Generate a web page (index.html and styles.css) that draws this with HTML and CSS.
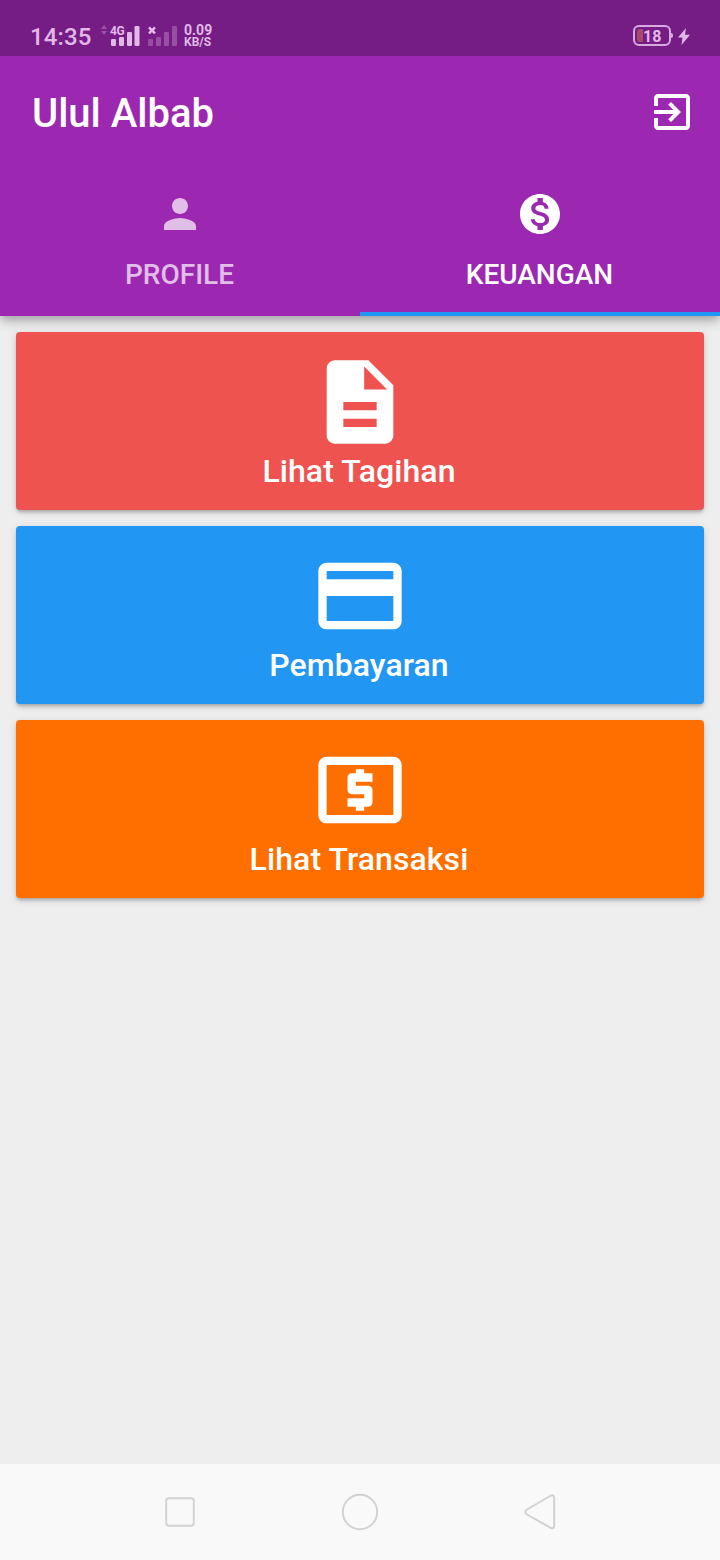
FILE: index.html
```html
<!DOCTYPE html>
<html lang="id">
<head>
<meta charset="utf-8">
<title>Ulul Albab</title>
<link rel="stylesheet" href="styles.css">
</head>
<body>
<div class="screen">
  <header class="header">
    <div class="status">
      <span class="clock">14:35</span>
      <div class="mobile">
        <svg class="data" width="6" height="10" viewBox="0 0 6 10"><path d="M0 4l3-4 3 4zM0 6h6l-3 4z"/></svg>
        <div class="sim">
          <span class="network">4G</span>
          <svg class="signal" width="30" height="22" viewBox="0 0 30 22"><rect x="1" y="14" width="5" height="7" rx="1.300"/><rect x="9" y="12" width="5" height="9" rx="1.300"/><rect x="17" y="7" width="5" height="14" rx="1.300"/><rect x="24.500" y="1" width="5" height="20" rx="1.300"/></svg>
        </div>
        <svg class="sim-off" width="30" height="22" viewBox="0 0 30 22"><g opacity=".32"><rect x="0" y="14" width="5" height="7" rx="1.300"/><rect x="8" y="12" width="5" height="9" rx="1.300"/><rect x="16" y="7" width="5" height="14" rx="1.300"/><rect x="24" y="1" width="5" height="20" rx="1.300"/></g><path class="cross" d="M1 2.300l6 6M7 2.300l-6 6"/></svg>
      </div>
      <div class="speed"><span class="rate">0.09</span><span class="unit">KB/S</span></div>
      <div class="battery">
        <div class="cell"><span class="charge"></span><span class="level">18</span></div>
        <span class="tip"></span>
        <svg class="bolt" width="12" height="17" viewBox="0 0 12 17"><path d="M8 0L0 9.500h4.500L3.500 17 12 6.800H7z"/></svg>
      </div>
    </div>
    <div class="toolbar">
      <h1 class="title">Ulul Albab</h1>
      <svg class="icon" viewBox="0 0 24 24"><path d="M10.090 15.590L11.500 17l5-5-5-5-1.410 1.410L12.670 11H3v2h9.670l-2.580 2.590zM19 3H5c-1.110 0-2 .9-2 2v4h2V5h14v14H5v-4H3v4c0 1.100.89 2 2 2h14c1.100 0 2-.9 2-2V5c0-1.100-.9-2-2-2z"/></svg>
    </div>
    <nav class="tabs">
      <div class="tab muted">
        <svg class="icon" viewBox="0 0 24 24"><path d="M12 12c2.210 0 4-1.790 4-4s-1.790-4-4-4-4 1.790-4 4 1.790 4 4 4zm0 2c-2.670 0-8 1.340-8 4v2h16v-2c0-2.660-5.330-4-8-4z"/></svg>
        <span class="tab-label">PROFILE</span>
      </div>
      <div class="tab active">
        <svg class="icon" viewBox="0 0 24 24"><path d="M12 2C6.480 2 2 6.480 2 12s4.480 10 10 10 10-4.480 10-10S17.520 2 12 2zm1.410 16.090V20h-2.670v-1.930c-1.710-.36-3.160-1.460-3.270-3.400h1.960c.1 1.050.82 1.870 2.650 1.870 1.960 0 2.400-.98 2.400-1.590 0-.83-.44-1.610-2.670-2.140-2.480-.6-4.180-1.620-4.180-3.670 0-1.720 1.390-2.840 3.110-3.210V4h2.670v1.950c1.860.45 2.790 1.860 2.850 3.390H14.300c-.05-1.110-.64-1.870-2.220-1.870-1.500 0-2.400.68-2.400 1.640 0 .84.65 1.390 2.670 1.910s4.180 1.390 4.180 3.910c-.01 1.830-1.380 2.830-3.120 3.160z"/></svg>
        <span class="tab-label">KEUANGAN</span>
      </div>
    </nav>
  </header>
  <main class="cards">
    <section class="card bills">
      <svg class="card-icon" viewBox="0 0 24 24"><path d="M14 2H6c-1.100 0-1.990.9-1.990 2L4 20c0 1.100.89 2 1.990 2H18c1.100 0 2-.9 2-2V8l-6-6zm2 16H8v-2h8v2zm0-4H8v-2h8v2zm-3-5V3.500L18.500 9H13z"/></svg>
      <span class="card-label">Lihat Tagihan</span>
    </section>
    <section class="card payment">
      <svg class="card-icon" viewBox="0 0 24 24"><path d="M20 4H4c-1.110 0-1.990.89-1.990 2L2 18c0 1.110.89 2 2 2h16c1.110 0 2-.89 2-2V6c0-1.110-.89-2-2-2zm0 14H4v-6h16v6zm0-10H4V6h16v2z"/></svg>
      <span class="card-label">Pembayaran</span>
    </section>
    <section class="card transactions">
      <svg class="card-icon" viewBox="0 0 24 24"><path d="M11 17h2v-1h1c.55 0 1-.45 1-1v-3c0-.55-.45-1-1-1h-3v-1h4V8h-2V7h-2v1h-1c-.55 0-1 .45-1 1v3c0 .55.45 1 1 1h3v1H9v2h2v1zm9-13H4c-1.110 0-1.990.89-1.990 2L2 18c0 1.110.89 2 2 2h16c1.110 0 2-.89 2-2V6c0-1.110-.89-2-2-2zm0 14H4V6h16v12z"/></svg>
      <span class="card-label">Lihat Transaksi</span>
    </section>
  </main>
  <footer class="navbar">
    <svg class="nav-icon" viewBox="0 0 40 40"><rect x="6.200" y="6.200" width="27.600" height="27.600" rx="2.500"/></svg>
    <svg class="nav-icon" viewBox="0 0 40 40"><circle cx="20" cy="20" r="17.200"/></svg>
    <svg class="nav-icon" viewBox="0 0 40 40"><path d="M31 3.500L7 17.500Q3.500 20 7 22.500L31 36Q34.200 37 34.200 33.500V6Q34.200 2.500 31 3.500z"/></svg>
  </footer>
</div>
</body>
</html>
```
FILE: styles.css
```css
* { box-sizing: border-box; }

body {
  margin: 0;
  font-family: Roboto, "Liberation Sans", sans-serif;
  font-weight: 500;
}

svg { display: block; flex: none; }

.screen {
  display: flex;
  flex-direction: column;
  width: 720px;
  height: 1560px;
  background: #eee;
  overflow: hidden;
}

.header {
  color: #fff;
  background: #9c27b0;
  box-shadow: 0 4px 8px -2px rgba(0, 0, 0, .2), 0 8px 10px rgba(0, 0, 0, .1), 0 2px 12px rgba(0, 0, 0, .1);
}

/* Status bar */
.status {
  display: flex;
  align-items: flex-start;
  height: 56px;
  padding: 0 30px;
  color: #e1b9e6;
  fill: #e1b9e6;
  background: #751d84;
}

.clock {
  width: 71px;
  padding-top: 22px;
  font-size: 24px;
  line-height: 30px;
  letter-spacing: .1px;
}

.mobile { display: flex; width: 83px; padding-top: 25px; }
.data { opacity: .35; }
.sim { position: relative; margin-left: 3px; width: 30px; }
.network {
  position: absolute;
  top: 0;
  left: 0;
  font-size: 12px;
  font-weight: 700;
  line-height: 12px;
  letter-spacing: -.5px;
}
.sim-off { margin-left: 8px; }
.cross { stroke: #e1b9e6; stroke-width: 2.6; }

.speed {
  display: flex;
  flex-direction: column;
  padding-top: 24px;
  font-weight: 700;
}
.rate { font-size: 14px; line-height: 13px; }
.unit { font-size: 12px; line-height: 11px; }

.battery {
  display: flex;
  align-items: center;
  margin-left: auto;
  padding-top: 25px;
}
.cell {
  display: flex;
  align-items: center;
  width: 38px;
  height: 21px;
  padding-left: 2px;
  border: 2px solid #d8abe0;
  border-radius: 6px;
}
.charge { width: 6px; height: 13px; border-radius: 3px 1px 1px 3px; background: #a74a67; }
.level { padding-top: 2px; font-size: 16px; font-weight: 700; line-height: 18px; }
.tip { width: 2px; height: 5px; border-radius: 0 2px 2px 0; background: #d8abe0; }
.bolt { margin: 2px 0 0 5px; }

/* App bar */
.toolbar {
  display: flex;
  align-items: center;
  justify-content: space-between;
  height: 112px;
  padding: 0 24px 0 32px;
}
.title { margin: 0; padding-top: 3px; font-size: 40px; font-weight: 500; line-height: 48px; }
.icon { width: 48px; height: 48px; fill: currentColor; }

.tabs { display: flex; height: 148px; }
.tab {
  display: flex;
  flex: 1;
  flex-direction: column;
  align-items: center;
  gap: 21px;
  padding-top: 22px;
  border-bottom: 4px solid transparent;
}
.muted { color: #e1bee7; }
.active { border-bottom-color: #2196f3; }
.tab-label { padding-right: 1px; font-size: 28px; line-height: 32px; }

/* Menu cards */
.cards {
  display: flex;
  flex: 1;
  flex-direction: column;
  gap: 16px;
  padding: 16px;
}
.card {
  display: flex;
  flex-direction: column;
  align-items: center;
  height: 178px;
  padding-top: 20px;
  color: #fff;
  border-radius: 4px;
  box-shadow: 0 4px 4px -2px rgba(0, 0, 0, .16), 0 2px 3px rgba(0, 0, 0, .1), 0 2px 8px rgba(0, 0, 0, .12);
}
.bills { background: #ef5350; }
.payment { background: #2196f3; }
.transactions { background: #ff6f00; }
.card-icon { width: 100px; height: 100px; fill: currentColor; }
.card-label { padding-right: 2px; font-size: 32px; line-height: 38px; letter-spacing: .08px; }

/* System navigation */
.navbar {
  display: flex;
  align-items: center;
  justify-content: center;
  gap: 140px;
  height: 96px;
  background: #f9f9f9;
}
.nav-icon { width: 40px; height: 40px; fill: none; stroke: #d2d2d2; stroke-width: 2; }
```
